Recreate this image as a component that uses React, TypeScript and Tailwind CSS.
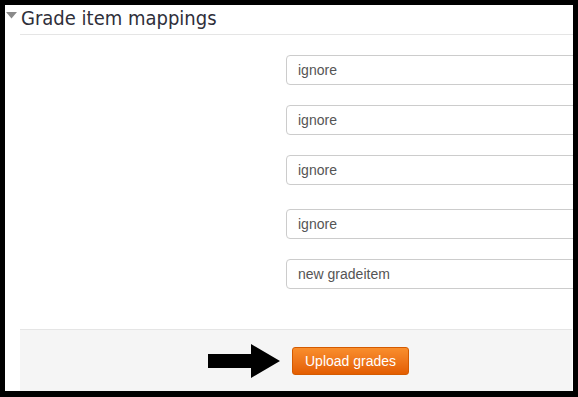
import React from "react";

const rows = [
  { label: "ignore", mt: "mt-[20px]" },
  { label: "ignore", mt: "mt-[20px]" },
  { label: "ignore", mt: "mt-[20px]" },
  { label: "ignore", mt: "mt-[24px]" },
  { label: "new gradeitem", mt: "mt-[20px]" },
];

export default function App() {
  return (
    <div className="w-[578px] h-[397px] bg-white border-black border-t-[5px] border-l-[5px] border-r-[5px] border-b-[6px] overflow-hidden flex flex-col">
      <div className="h-[29px] flex items-start shrink-0">
        <svg width="11" height="7" viewBox="0 0 11 7" className="ml-[1px] mt-[7px]">
          <polygon points="0,0 11,0 5.5,6.5" fill="#8a8a8a" />
        </svg>
        <span className="ml-[4px] mt-[-1px] text-[20px] leading-[28px] text-[#2f2f3a] [font-stretch:condensed] [font-family:'DejaVu_Sans',sans-serif]">
          Grade item mappings
        </span>
      </div>
      <div className="ml-[15px] h-px bg-[#e5e5e5] shrink-0" />
      <div className="flex flex-col shrink-0 pl-[281px]">
        {rows.map((r, i) => (
          <div
            key={i}
            className={`${r.mt} h-[30px] w-[320px] border border-[#ccc] rounded-[4px] flex items-center pl-[11px] text-[14px] text-[#555] [font-family:'Liberation_Sans',Arial,sans-serif] bg-white`}
          >
            {r.label}
          </div>
        ))}
      </div>
      <div className="mt-[40px] ml-[15px] mr-[1px] flex-1 bg-[#f5f5f5] border-t border-[#e5e5e5] flex items-center pl-[188px] gap-[12px]">
        <svg width="72" height="34" viewBox="0 0 72 34" className="mt-[1px]">
          <polygon points="0,10 43,10 43,0 72,17 43,34 43,24 0,24" fill="#000" />
        </svg>
        <button className="h-[28px] px-[12px] rounded-[3px] border border-[#d45a00] bg-gradient-to-b from-[#f98e2c] to-[#e35d00] text-white text-[14px] [font-family:'Liberation_Sans',Arial,sans-serif] leading-none">
          Upload grades
        </button>
      </div>
    </div>
  );
}
